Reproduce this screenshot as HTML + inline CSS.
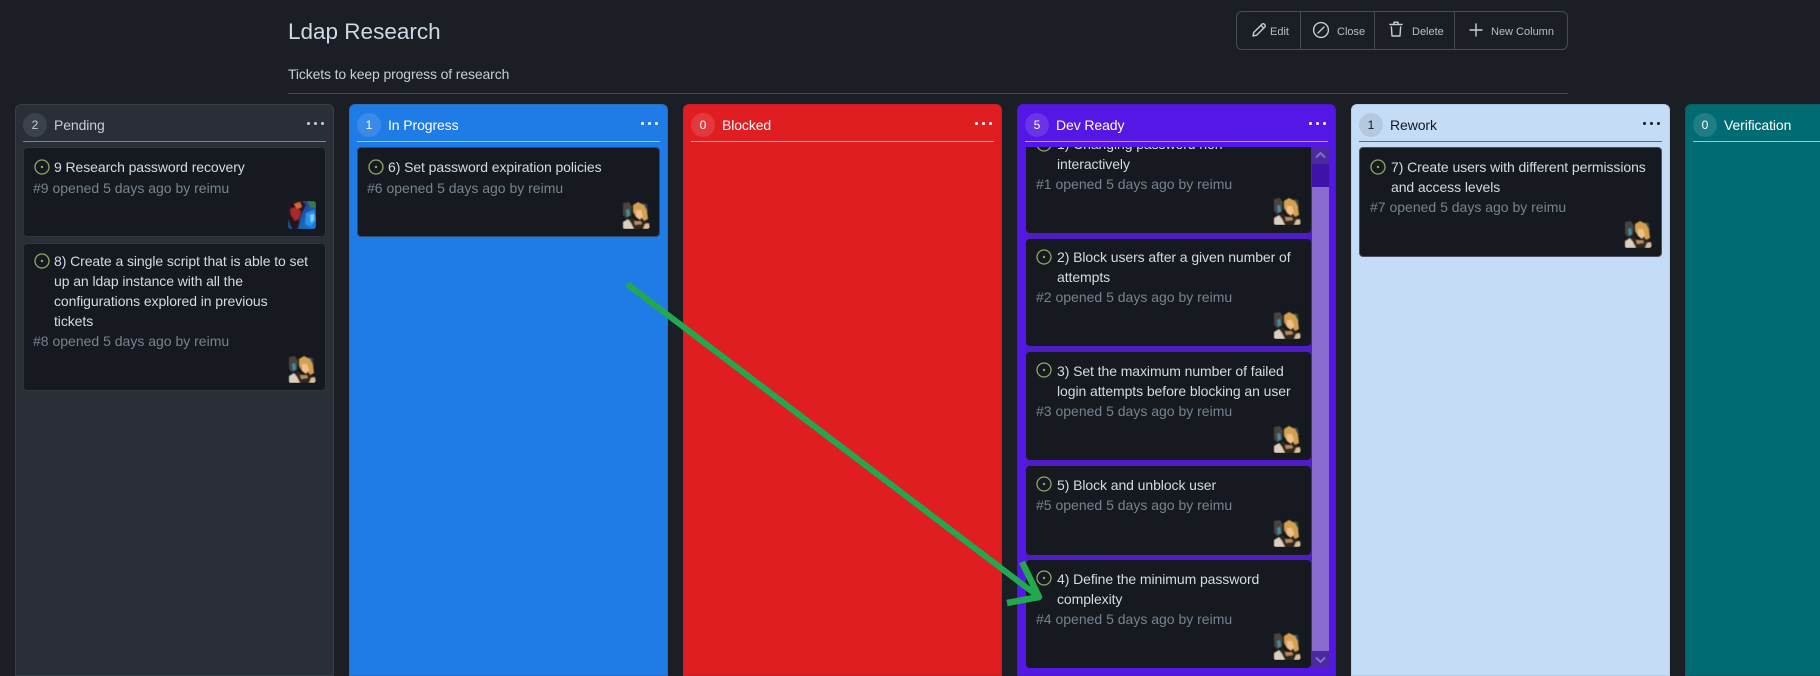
<!DOCTYPE html>
<html><head><meta charset="utf-8"><title>Ldap Research</title>
<style>
html,body{margin:0;padding:0;width:1820px;height:676px;overflow:hidden;background:#1b1e24;font-family:"Liberation Sans",sans-serif}
#w{position:relative;width:1820px;height:676px;overflow:hidden;background:#1b1e24;contain:paint}
.a{position:absolute}
.t{position:absolute;white-space:nowrap;line-height:20px}
h1{position:absolute;margin:0;left:288px;top:17px;font-size:22.5px;line-height:30px;font-weight:400;color:#cdd9e5}
.sub{left:288px;top:64px;font-size:14px;color:#c5ced6;letter-spacing:-.13px}
.hr{position:absolute;left:288px;top:93px;width:1280px;height:1px;background:#444c56}
.btns{position:absolute;left:1236px;top:11px;width:330px;height:37px;border:1px solid #444c56;border-radius:6px;background:#1b1e24}
.sep{position:absolute;top:0;width:1px;height:37px;background:#444c56}
.bt{position:absolute;top:10px;font-size:11px;line-height:20px;color:#b4bfc9;white-space:nowrap}
.btns svg{position:absolute;fill:none;stroke:#c5ced6;stroke-width:1.4;stroke-linecap:round;stroke-linejoin:round}
.col{position:absolute;top:104px;width:319px;height:572px;border-radius:6px 6px 0 0;box-sizing:border-box;overflow:hidden}
.badge{position:absolute;width:24px;height:24px;border-radius:50%;text-align:center;font-size:12px;line-height:24px;background:rgba(255,255,255,.12)}
.ct{position:absolute;font-size:14px;line-height:20px;white-space:nowrap;letter-spacing:-.1px}
.dots{position:absolute;width:18px;height:4px}
.dots i{position:absolute;top:0;width:3px;height:3px;border-radius:50%;background:currentColor}
.ln{position:absolute;width:303px;height:1px}
.card{position:absolute;background:#16191f;border:1px solid #30353c;border-radius:4px;box-sizing:border-box;overflow:hidden}
.card .ic{position:absolute;width:16px;height:16px}
.card .tt{position:absolute;font-size:14px;line-height:20px;color:#d3dbe3;white-space:nowrap;letter-spacing:-.08px}
.card .mt{position:absolute;font-size:14px;line-height:20px;color:#768390;white-space:nowrap}
.card svg.av{position:absolute;width:28px;height:28px;border-radius:3px}
</style></head>
<body>
<div id="w">
<svg width="0" height="0" style="position:absolute">
<defs>
<filter id="b" x="-5%" y="-5%" width="110%" height="110%"><feGaussianBlur stdDeviation=".6"/></filter>
<symbol id="ic" viewBox="0 0 16 16"><circle cx="8" cy="8" r="7" fill="none" stroke="#8fa866" stroke-width="1.3"/><circle cx="8" cy="8" r="1.2" fill="#8fa866"/></symbol>
<symbol id="u" viewBox="0 0 28 28"><rect width="28" height="28" fill="#16181c"/><g filter="url(#b)"><path d="M1 2l6-1 3 5-1 9-5 2-3-3z" fill="#4a453e"/><path d="M4 9l3-1 1 6-3 2z" fill="#3c8fa8"/><path d="M21 2l4 1 1 7-3 1z" fill="#2f4a50"/><path d="M11 4l5-3 6 3 3 6 1 8-4 2-3-4-5 0-3-5z" fill="#d3a050"/><path d="M14 9l5 0 2 6-3 4-4-3z" fill="#eec08c"/><path d="M5 20l5-4 5 5 7-2 4 3 1 6H4z" fill="#33261d"/><path d="M1 21l5-3 3 4 3 6H1z" fill="#d9d0c0"/><path d="M23 23l4-1 1 6h-7z" fill="#d8c09c"/><path d="M12 20l7 0 1 3-7 1z" fill="#b88c64"/></g></symbol>
<linearGradient id="bl" x1="0" y1="0" x2="1" y2="1"><stop offset="0" stop-color="#1c2a63"/><stop offset="1" stop-color="#1c7fe0"/></linearGradient>
<symbol id="v" viewBox="0 0 28 28"><rect width="28" height="28" fill="#1d2a5c"/><g filter="url(#b)"><rect width="28" height="28" fill="url(#bl)"/><path d="M0 0h14l4 4-5 10-3 14H4L0 18z" fill="#24181f"/><path d="M2 8l6-2 5 4-2 8-4 2-4-6z" fill="#a82c2a"/><path d="M6 3l6-2 2 5-5 2z" fill="#d8683a"/><path d="M19 0h9v6l-5 1z" fill="#3b7a3e"/><path d="M18 12l8-3 2 10-5 7-6-3z" fill="#2b90ef"/><path d="M22 14l4-1 0 6-3 3z" fill="#7fd2fb"/></g></symbol>
</defs></svg>

<h1>Ldap Research</h1>
<div class="t sub">Tickets to keep progress of research</div>
<div class="hr"></div>
<div class="btns">
 <svg style="left:14px;top:10px" width="16" height="16" viewBox="0 0 16 16"><path d="M2 14l.8-3.600L11 2.200a1.600 1.600 0 0 1 2.300 0l.5.5a1.600 1.600 0 0 1 0 2.300L5.600 13.200z"/><path d="M10 3.400l2.600 2.600"/></svg>
 <div class="bt" style="left:33px">Edit</div>
 <div class="sep" style="left:63px"></div>
 <svg style="left:75px;top:9px" width="18" height="18" viewBox="0 0 18 18"><circle cx="9" cy="9" r="7.400"/><path d="M12 6l-6 6"/></svg>
 <div class="bt" style="left:100px">Close</div>
 <div class="sep" style="left:137px"></div>
 <svg style="left:151px;top:8px" width="16" height="18" viewBox="0 0 16 18"><path d="M2 4.500h12M6 4.500V2.200h4v2.300M3.400 7l.6 9h8l.6-9"/></svg>
 <div class="bt" style="left:175px">Delete</div>
 <div class="sep" style="left:217px"></div>
 <svg style="left:231px;top:10px" width="16" height="16" viewBox="0 0 16 16"><path d="M8 2v12M2 8h12"/></svg>
 <div class="bt" style="left:254px">New Column</div>
</div>

<!-- Pending -->
<div class="col" style="left:15px;background:#2a2f37;border:1px solid #393f47;color:#c5ced6">
 <div class="badge" style="background:#3c424b;left:7px;top:8px">2</div>
 <div class="ct" style="left:38px;top:10px">Pending</div>
 <div class="dots" style="left:291px;top:17px"><i style="left:0"></i><i style="left:7px"></i><i style="left:14px"></i></div>
 <div class="ln" style="left:7px;top:36px;background:#7c838c"></div>
 <div class="card" style="left:7px;top:42px;width:303px;height:90px">
  <svg class="ic" style="left:10px;top:11px"><use href="#ic"/></svg>
  <div class="tt" style="left:30px;top:9px">9 Research password recovery</div>
  <div class="mt" style="left:9px;top:30px">#9 opened 5 days ago by reimu</div>
  <svg class="av" style="left:264px;top:53px"><use href="#v"/></svg>
 </div>
 <div class="card" style="left:7px;top:138px;width:303px;height:148px">
  <svg class="ic" style="left:10px;top:9px"><use href="#ic"/></svg>
  <div class="tt" style="left:30px;top:7px">8) Create a single script that is able to set<br>up an ldap instance with all the<br>configurations explored in previous<br>tickets</div>
  <div class="mt" style="left:9px;top:87px">#8 opened 5 days ago by reimu</div>
  <svg class="av" style="left:264px;top:111px"><use href="#u"/></svg>
 </div>
</div>

<!-- In Progress -->
<div class="col" style="left:349px;background:#1f7be6;color:#fff;border:1px solid #2c6fbe">
 <div class="badge" style="left:7px;top:8px">1</div>
 <div class="ct" style="left:38px;top:10px">In Progress</div>
 <div class="dots" style="left:291px;top:17px"><i style="left:0"></i><i style="left:7px"></i><i style="left:14px"></i></div>
 <div class="ln" style="left:7px;top:36px;background:#9cc8f5"></div>
 <div class="card" style="left:7px;top:42px;width:303px;height:90px;border-color:#2f4a6a">
  <svg class="ic" style="left:10px;top:11px"><use href="#ic"/></svg>
  <div class="tt" style="left:30px;top:9px">6) Set password expiration policies</div>
  <div class="mt" style="left:9px;top:30px">#6 opened 5 days ago by reimu</div>
  <svg class="av" style="left:264px;top:53px"><use href="#u"/></svg>
 </div>
</div>

<!-- Blocked -->
<div class="col" style="left:683px;background:#e01e22;color:#fff;border:1px solid #c42226">
 <div class="badge" style="left:7px;top:8px">0</div>
 <div class="ct" style="left:38px;top:10px">Blocked</div>
 <div class="dots" style="left:291px;top:17px"><i style="left:0"></i><i style="left:7px"></i><i style="left:14px"></i></div>
 <div class="ln" style="left:7px;top:36px;background:#f3a5a7"></div>
</div>

<!-- Dev Ready -->
<div class="col" style="left:1017px;background:#5417e6;color:#fff;border:1px solid #4a1ac4">
 <div class="badge" style="left:7px;top:8px">5</div>
 <div class="ct" style="left:38px;top:10px">Dev Ready</div>
 <div class="dots" style="left:291px;top:17px"><i style="left:0"></i><i style="left:7px"></i><i style="left:14px"></i></div>
 <div class="ln" style="left:7px;top:36px;background:#b9a0f5"></div>
 <div class="a" style="left:8px;top:42px;width:303px;height:521px;overflow:hidden;background:#4f1cc8">
  <div class="card" style="left:0;top:-21px;width:285px;height:107px;border:0">
   <svg class="ic" style="left:10px;top:10px"><use href="#ic"/></svg>
   <div class="tt" style="left:31px;top:8px">1) Changing password non<br>interactively</div>
   <div class="mt" style="left:10px;top:48px">#1 opened 5 days ago by reimu</div>
   <svg class="av" style="left:247px;top:71px"><use href="#u"/></svg>
  </div>
  <div class="card" style="left:0;top:92px;width:285px;height:107px;border:0">
   <svg class="ic" style="left:10px;top:10px"><use href="#ic"/></svg>
   <div class="tt" style="left:31px;top:8px">2) Block users after a given number of<br>attempts</div>
   <div class="mt" style="left:10px;top:48px">#2 opened 5 days ago by reimu</div>
   <svg class="av" style="left:247px;top:72px"><use href="#u"/></svg>
  </div>
  <div class="card" style="left:0;top:205px;width:285px;height:108px;border:0">
   <svg class="ic" style="left:10px;top:10px"><use href="#ic"/></svg>
   <div class="tt" style="left:31px;top:9px">3) Set the maximum number of failed<br>login attempts before blocking an user</div>
   <div class="mt" style="left:10px;top:49px">#3 opened 5 days ago by reimu</div>
   <svg class="av" style="left:247px;top:73px"><use href="#u"/></svg>
  </div>
  <div class="card" style="left:0;top:319px;width:285px;height:89px;border:0">
   <svg class="ic" style="left:10px;top:10px"><use href="#ic"/></svg>
   <div class="tt" style="left:31px;top:9px">5) Block and unblock user</div>
   <div class="mt" style="left:10px;top:29px">#5 opened 5 days ago by reimu</div>
   <svg class="av" style="left:247px;top:53px"><use href="#u"/></svg>
  </div>
  <div class="card" style="left:0;top:413px;width:285px;height:108px;border:0">
   <svg class="ic" style="left:10px;top:10px"><use href="#ic"/></svg>
   <div class="tt" style="left:31px;top:9px">4) Define the minimum password<br>complexity</div>
   <div class="mt" style="left:10px;top:49px">#4 opened 5 days ago by reimu</div>
   <svg class="av" style="left:247px;top:72px"><use href="#u"/></svg>
  </div>
  <!-- scrollbar -->
  <div class="a" style="left:286px;top:0;width:17px;height:521px;background:#3f12a8"></div>
  <div class="a" style="left:286px;top:40px;width:17px;height:464px;background:#8a6cd0"></div>
  <div class="a" style="left:286px;top:0;width:17px;height:17px;background:#4a2a9e"></div>
  <div class="a" style="left:286px;top:504px;width:17px;height:17px;background:#4a2a9e"></div>
  <svg class="a" style="left:286px;top:0" width="17" height="17"><path d="M4 10.500l4.500-4.500 4.500 4.500" fill="none" stroke="#8a6cd0" stroke-width="2"/></svg>
  <svg class="a" style="left:286px;top:504px" width="17" height="17"><path d="M4 6.500l4.500 4.500 4.500-4.500" fill="none" stroke="#8a6cd0" stroke-width="2"/></svg>
 </div>
</div>

<!-- Rework -->
<div class="col" style="left:1351px;background:#c5dcf7;color:#14181e;border:1px solid #b6cde8">
 <div class="badge" style="left:7px;top:8px;background:#b4c8df">1</div>
 <div class="ct" style="left:38px;top:10px">Rework</div>
 <div class="dots" style="left:291px;top:17px"><i style="left:0"></i><i style="left:7px"></i><i style="left:14px"></i></div>
 <div class="ln" style="left:7px;top:36px;background:#5a6a80"></div>
 <div class="card" style="left:7px;top:42px;width:303px;height:110px;border-color:#4a5260">
  <svg class="ic" style="left:10px;top:11px"><use href="#ic"/></svg>
  <div class="tt" style="left:31px;top:9px">7) Create users with different permissions<br>and access levels</div>
  <div class="mt" style="left:10px;top:49px">#7 opened 5 days ago by reimu</div>
  <svg class="av" style="left:264px;top:72px"><use href="#u"/></svg>
 </div>
</div>

<!-- Verification -->
<div class="col" style="left:1685px;width:135px;background:#006b73;color:#fff;border:1px solid #0a5f66;border-right:0;border-radius:6px 0 0 0">
 <div class="badge" style="left:7px;top:8px">0</div>
 <div class="ct" style="left:38px;top:10px">Verification</div>
 <div class="ln" style="left:7px;top:36px;width:128px;background:#9cc8cc"></div>
</div>

<!-- Arrow -->
<svg class="a" style="left:0;top:0;pointer-events:none" width="1820" height="676">
 <path d="M627 284L1039 597" fill="none" stroke="#22a94f" stroke-width="6"/>
 <path d="M1022 562L1039 597L1007 603" fill="none" stroke="#22a94f" stroke-width="6.500" stroke-linejoin="round"/>
</svg>
</div>
</body></html>
